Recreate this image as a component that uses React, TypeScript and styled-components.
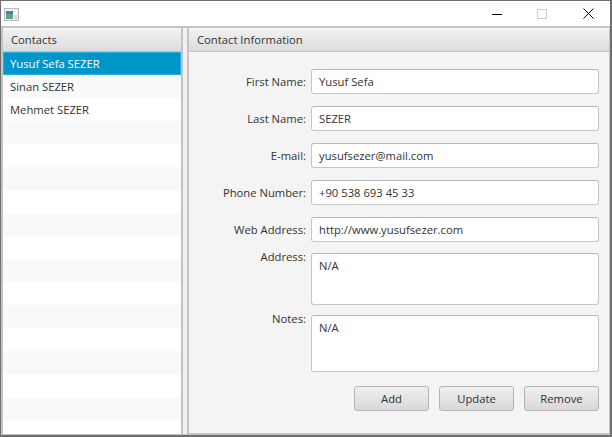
import styled, { createGlobalStyle } from "styled-components"

const GlobalStyle = createGlobalStyle`
    html, body {
        margin: 0;
        padding: 0;
        background: #ffffff;
    }
    * {
        box-sizing: border-box;
    }
`

const contacts = ["Yusuf Sefa SEZER", "Sinan SEZER", "Mehmet SEZER"]
const fields = [
    { label: "First Name:", value: "Yusuf Sefa" },
    { label: "Last Name:", value: "SEZER" },
    { label: "E-mail:", value: "yusufsezer@mail.com" },
    { label: "Phone Number:", value: "+90 538 693 45 33" },
    { label: "Web Address:", value: "http://www.yusufsezer.com" },
]

function App() {
    const rows = Array.from({ length: 17 }, (_, i) => contacts[i] ?? "")

    return (
        <>
            <GlobalStyle />
            <Window>
                <TitleBar>
                    <AppIcon width="15" height="13" viewBox="0 0 15 13">
                        <rect x="0.5" y="0.5" width="14" height="12" fill="#eef0f1" stroke="#b9bcbf" />
                        <rect x="2" y="3" width="7" height="8" fill="#5f9f8c" />
                        <rect x="2" y="3" width="7" height="3" fill="#4f7fa6" />
                        <rect x="10" y="3" width="3" height="4" fill="#f8f8f4" />
                        <rect x="10" y="7" width="3" height="4" fill="#c8e0cc" />
                    </AppIcon>
                    <WinButtons>
                        <WinButton>
                            <svg width="10" height="10" viewBox="0 0 10 10">
                                <path d="M0 5.5H10" stroke="#000" strokeWidth="1" />
                            </svg>
                        </WinButton>
                        <WinButton>
                            <svg width="10" height="10" viewBox="0 0 10 10">
                                <rect x="0.5" y="0.5" width="9" height="9" fill="none" stroke="#cccccc" />
                            </svg>
                        </WinButton>
                        <WinButton>
                            <svg width="11" height="11" viewBox="0 0 11 11">
                                <path d="M0.5 0.5L10.5 10.5M10.5 0.5L0.5 10.5" stroke="#000" strokeWidth="1" />
                            </svg>
                        </WinButton>
                    </WinButtons>
                </TitleBar>
                <Split>
                    <ListPane>
                        <PaneHeader>Contacts</PaneHeader>
                        <ListBody>
                            {rows.map((name, i) => (
                                <ListRow key={i} $odd={i % 2 === 1} $selected={i === 0}>
                                    {name}
                                </ListRow>
                            ))}
                        </ListBody>
                    </ListPane>
                    <Divider />
                    <DetailPane>
                        <PaneHeader>Contact Information</PaneHeader>
                        <Form>
                            {fields.map((f) => (
                                <FieldRow key={f.label}>
                                    <Label>{f.label}</Label>
                                    <TextField>{f.value}</TextField>
                                </FieldRow>
                            ))}
                            <AreaRow>
                                <AreaLabel>Address:</AreaLabel>
                                <TextArea $height={52}>N/A</TextArea>
                            </AreaRow>
                            <AreaRow>
                                <AreaLabel>Notes:</AreaLabel>
                                <TextArea $height={57}>N/A</TextArea>
                            </AreaRow>
                            <ButtonRow>
                                <Button>Add</Button>
                                <Button>Update</Button>
                                <Button>Remove</Button>
                            </ButtonRow>
                        </Form>
                    </DetailPane>
                </Split>
            </Window>
        </>
    )
}

export default App

const Window = styled.div`
    width: 612px;
    height: 437px;
    display: flex;
    flex-direction: column;
    overflow: hidden;
    background: #ffffff;
    border-style: solid;
    border-color: #6f6f6f;
    border-width: 1px 2px 2px 1px;
    font-family: "Open Sans", "Noto Sans", sans-serif;
    font-size: 11.25px;
    color: #333333;
`

const TitleBar = styled.div`
    height: 25px;
    flex: none;
    display: flex;
    align-items: center;
    justify-content: space-between;
    padding-left: 3px;
    background: #ffffff;
`

const AppIcon = styled.svg`
    display: block;
    margin-top: 1px;
`

const WinButtons = styled.div`
    display: flex;
    height: 100%;
    margin-right: -1px;
`

const WinButton = styled.div`
    width: 45px;
    height: 25px;
    display: flex;
    align-items: center;
    justify-content: center;

    &:last-child {
        margin-left: 1.5px;
    }
`

const Split = styled.div`
    flex: 1;
    min-height: 0;
    display: flex;
    background: #f4f4f4;
    border-style: solid;
    border-color: #c4c4c4;
    border-width: 2px 1px 1px 2px;
`

const ListPane = styled.div`
    width: 178px;
    flex: none;
    display: flex;
    flex-direction: column;
    background: #ffffff;
`

const Divider = styled.div`
    width: 8px;
    flex: none;
    background: #f0f0f0;
    border-left: 2px solid #c4c4c4;
    border-right: 2px solid #c4c4c4;
`

const DetailPane = styled.div`
    flex: 1;
    min-width: 0;
    display: flex;
    flex-direction: column;
    background: #f4f4f4;
    border-bottom: 1px solid #c4c4c4;
`

const PaneHeader = styled.div`
    height: 24px;
    flex: none;
    display: flex;
    align-items: center;
    padding-left: 8px;
    color: #333333;
    background: linear-gradient(#f2f2f2, #dcdcdc);
    border-bottom: 1px solid #c0c0c0;
    box-shadow: inset 0 1px 0 #fafafa;
`

const ListBody = styled.div`
    flex: 1;
    min-height: 0;
    overflow: hidden;
    background: #ffffff;
`

const ListRow = styled.div<{ $odd: boolean; $selected: boolean }>`
    height: 23px;
    display: flex;
    align-items: center;
    padding-left: ${(p) => (p.$selected ? "6px" : "7px")};
    background: ${(p) => (p.$selected ? "#0096c9" : p.$odd ? "#f9f9f9" : "#ffffff")};
    color: ${(p) => (p.$selected ? "#ffffff" : "#333333")};
    border: ${(p) => (p.$selected ? "1px solid #2ab0dc" : "none")};
`

const Form = styled.div`
    flex: 1;
    display: flex;
    flex-direction: column;
    padding: 17px 10px 0 0;
`

const FieldRow = styled.div`
    height: 25px;
    margin-bottom: 12px;
    display: flex;
    align-items: center;
    justify-content: flex-end;
    gap: 5px;
`

const Label = styled.div`
    text-align: right;
`

const TextField = styled.div`
    width: 288px;
    height: 25px;
    display: flex;
    align-items: center;
    padding-left: 7px;
    background: #ffffff;
    border: 1px solid #c6c6c6;
    border-top-color: #b8b8b8;
    border-radius: 3px;
`

const AreaRow = styled.div`
    display: flex;
    justify-content: flex-end;
    gap: 5px;
    margin-top: -1px;
    margin-bottom: 11px;
`

const AreaLabel = styled.div`
    line-height: 16px;
    margin-top: -4px;
`

const TextArea = styled.div<{ $height: number }>`
    width: 288px;
    height: ${(p) => p.$height}px;
    padding: 4px 7px;
    background: #ffffff;
    border: 1px solid #c6c6c6;
    border-top-color: #b8b8b8;
    border-radius: 3px;
`

const ButtonRow = styled.div`
    display: flex;
    justify-content: flex-end;
    gap: 10px;
    margin-top: 3px;
`

const Button = styled.div`
    width: 75px;
    height: 25px;
    display: flex;
    align-items: center;
    justify-content: center;
    background: linear-gradient(#efefef, #d8d8d8);
    border: 1px solid #b4b4b4;
    border-radius: 3px;
`
